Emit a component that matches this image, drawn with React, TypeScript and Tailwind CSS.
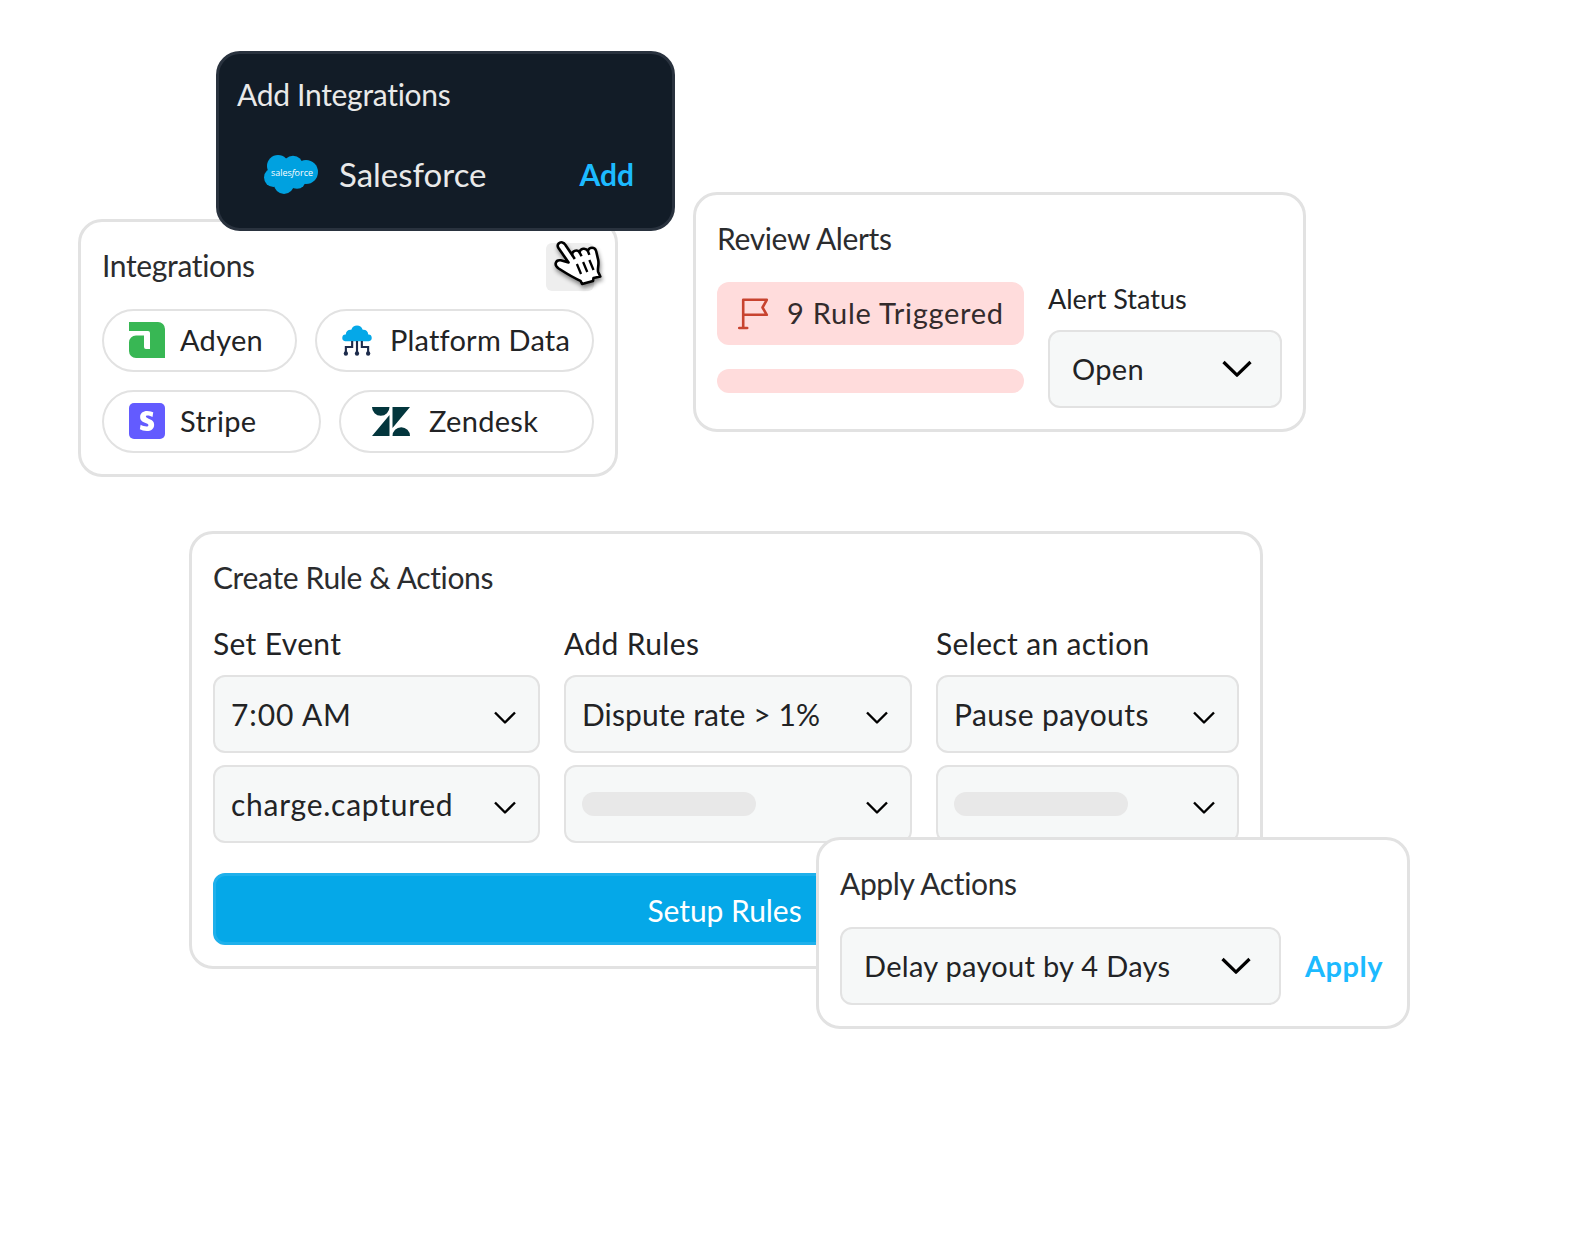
import { clsx } from 'clsx';
import { SiStripe } from 'react-icons/si';

function Chevron({ large = false }) {
  return large ? (
    <svg width="30" height="18" viewBox="0 0 30 18" fill="none" className="shrink-0">
      <path d="M1.5 2 15 15.2 28.5 2" stroke="#000" strokeWidth="3.2" strokeLinejoin="round" />
    </svg>
  ) : (
    <svg width="22" height="14" viewBox="0 0 22 14" fill="none" className="mt-[7px] shrink-0">
      <path d="M1 1.5 11 11.5 21 1.5" stroke="#000" strokeWidth="2.4" strokeLinejoin="round" />
    </svg>
  );
}

function SalesforceLogo() {
  return (
    <svg width="56" height="42" viewBox="0 0 56 42" className="mt-px shrink-0">
      <g fill="#00a1e0">
        <circle cx="15" cy="12" r="11" />
        <circle cx="30" cy="11.5" r="9.8" />
        <circle cx="43" cy="18" r="12" />
        <circle cx="10.5" cy="23.5" r="9.5" />
        <circle cx="21" cy="30" r="10" />
        <circle cx="34" cy="26" r="8.8" />
        <rect x="12" y="10" width="28" height="20" />
      </g>
      <text
        x="8"
        y="22"
        fill="#fff"
        textLength="42"
        lengthAdjust="spacingAndGlyphs"
        className="font-['Open_Sans',sans-serif] text-[9.5px] font-medium"
      >
        sales<tspan fontStyle="italic">f</tspan>orce
      </text>
    </svg>
  );
}

function AdyenLogo() {
  return (
    <svg width="36" height="36" viewBox="0 0 36 36" className="mb-px shrink-0">
      <path
        fill="#38b754"
        d="M0 0h29a7 7 0 0 1 7 7v29H7a7 7 0 0 1-7-7v-8.500a7 7 0 0 1 7-7h8V25a2 2 0 0 0 2 2h4V11a2 2 0 0 0-2-2H0z"
      />
    </svg>
  );
}

function PlatformLogo() {
  return (
    <svg width="30" height="31" viewBox="0 0 31 31" preserveAspectRatio="none" fill="none" className="shrink-0">
      <path
        fill="#05a8e8"
        d="M3.300 16.200a3.300 3.300 0 0 1 .6-6.600C4 6.500 6.300 4.500 9.600 4.800 10.700 2 12.700.6 15.500.6s4.800 1.400 5.900 4.200c3.300-.3 5.600 1.700 5.700 4.800a3.300 3.300 0 0 1 .6 6.600z"
      />
      <path stroke="#1d2b4b" strokeWidth="2.2" d="M10.500 16v6H4v7M15.500 16v12M20.500 16v6H27v7" />
      <g fill="#1d2b4b">
        <circle cx="4" cy="28.500" r="2.200" />
        <circle cx="15.500" cy="28.500" r="2.200" />
        <circle cx="27" cy="28.500" r="2.200" />
      </g>
    </svg>
  );
}

function StripeLogo() {
  return (
    <span className="mb-px flex size-9 shrink-0 items-center justify-center rounded-[5px] bg-[#635bff]">
      <SiStripe className="size-5 text-white" />
    </span>
  );
}

function ZendeskLogo() {
  return (
    <svg width="38" height="29" viewBox="0 0 38 29" fill="#03363d" className="shrink-0">
      <path d="M0 0h17.500a8.750 8.750 0 0 1-17.500 0zM20.500 0H38L20.500 21zM17.500 8v21H0zM20.500 29a8.750 8.750 0 0 1 17.500 0z" />
    </svg>
  );
}

function FlagIcon() {
  return (
    <svg width="31" height="32" viewBox="0 0 31 32" fill="none" className="shrink-0">
      <path
        d="M5.200 30V1.800h23.600l-4.300 7.700 4.300 7.300H5.200M1.200 30h8"
        stroke="#c8432f"
        strokeWidth="2.600"
        strokeLinecap="round"
        strokeLinejoin="round"
      />
    </svg>
  );
}

function HandCursor() {
  return (
    <svg
      width="52"
      height="50"
      viewBox="0 0 50 50"
      preserveAspectRatio="none"
      className="absolute top-[-3px] left-[8px] drop-shadow-[1px_3px_2px_rgba(0,0,0,0.45)]"
    >
      <path
        d="M4.500 3.500C6.500 1.500 9.500 2.200 11 5l6.500 10c-.5-4 4.500-6 7-2.800.8-4 6-4.700 8-1.400 1.500-4 6.700-4 8 .2l2 9c1 5-1 9 0 12l2 4.500-6.500 1.500-.5 3-10.500 3-1.500-3.200C18 37.500 12 33.500 4.500 28.500c-5-3.500-3-9 2-8.200l7.500 2.200L4.300 8c-.9-1.500-.8-3.500.2-4.500z"
        fill="#fff"
        stroke="#000"
        strokeWidth="2.5"
        strokeLinejoin="round"
      />
      <path d="m17.500 15 2.500 4M24.500 12.200l2 4M32.500 10.800l1.500 4" stroke="#000" strokeWidth="2.4" />
      <path d="m22 24 4 10M28 22l4 10M34 20l4 10" stroke="#000" strokeWidth="2.2" />
    </svg>
  );
}

function Card({ className, children }) {
  return (
    <section className={clsx('rounded-3xl border-[3px] border-[#e2e2e2] bg-white p-[21px]', className)}>
      {children}
    </section>
  );
}

function Title({ children }) {
  return <h2 className="text-[30px] leading-[44px] tracking-[-0.35px] text-[#2b2c2e]">{children}</h2>;
}

function Pill({ className, children }) {
  return (
    <div
      className={clsx(
        'flex h-[63px] items-center rounded-full border-2 border-[#e2e2e2] text-[29px] tracking-[0.3px] text-[#222325] [&>span:last-child]:mb-0.5',
        className
      )}
    >
      {children}
    </div>
  );
}

function Select({ value, large = false, className = '', tracking = '' }) {
  return (
    <div
      className={clsx(
        'flex h-[78px] items-center justify-between rounded-xl border-2 border-[#e2e2e2] bg-[#f6f8f8] whitespace-nowrap text-[#222325]',
        large ? 'pr-[28px] pl-[22px] text-[29px]' : 'pr-[22px] pl-4 text-[30px]',
        className
      )}
    >
      {value ? (
        <span className={clsx(tracking, !large && 'mt-px')}>{value}</span>
      ) : (
        <span className="h-6 w-[174px] rounded-full bg-[#e8e8e8]" />
      )}
      <Chevron large={large} />
    </div>
  );
}

const columns = [
  {
    label: 'Set Event',
    options: [
      { value: '7:00 AM', tracking: 'tracking-[0.9px]' },
      { value: 'charge.captured', tracking: 'tracking-[0.75px]' },
    ],
  },
  { label: 'Add Rules', options: [{ value: 'Dispute rate > 1%', tracking: 'tracking-[0.1px]' }, { value: '' }] },
  { label: 'Select an action', options: [{ value: 'Pause payouts', tracking: 'tracking-[0.4px]' }, { value: '' }] },
];

function AddIntegrations() {
  return (
    <section className="absolute top-[-168px] left-[138px] h-[180px] w-[459px] rounded-3xl border-[3px] border-[#29323e] bg-[#121c27] px-[18px] pt-[18px] text-[#e9e9e9]">
      <h2 className="text-[30px] leading-[44px] tracking-[-0.3px]">Add Integrations</h2>
      <div className="mt-[34px] flex items-center pr-[20px] pl-[26px]">
        <SalesforceLogo />
        <span className="ml-[20px] text-[33px] leading-[48px]">Salesforce</span>
        <span className="ml-auto text-[30px] font-bold text-[#1cbaff]">Add</span>
      </div>
    </section>
  );
}

function Integrations() {
  return (
    <div className="relative mt-[27px] w-[540px]">
      <Card className="h-[258px]">
        <div className="flex h-12 justify-between">
          <Title>Integrations</Title>
          <div className="relative size-12 rounded-md bg-[#eee]">
            <HandCursor />
          </div>
        </div>
        <div className="mt-[18px] flex gap-[18px]">
          <Pill className="w-[195px] gap-[15px] pl-[25px]">
            <AdyenLogo />
            <span>Adyen</span>
          </Pill>
          <Pill className="w-[279px] gap-[18px] pl-[25px]">
            <PlatformLogo />
            <span className="tracking-[0.2px]">Platform Data</span>
          </Pill>
        </div>
        <div className="mt-[18px] flex gap-[18px]">
          <Pill className="w-[219px] gap-[15px] pl-[25px]">
            <StripeLogo />
            <span>Stripe</span>
          </Pill>
          <Pill className="w-[255px] gap-[19px] pl-[31px]">
            <ZendeskLogo />
            <span>Zendesk</span>
          </Pill>
        </div>
      </Card>
      <AddIntegrations />
    </div>
  );
}

function ReviewAlerts() {
  return (
    <Card className="h-[240px] w-[613px]">
      <Title>Review Alerts</Title>
      <div className="flex gap-6">
        <div className="mt-[22px] w-[307px]">
          <div className="flex h-[63px] items-center gap-[18px] rounded-xl bg-[#ffdcdc] pl-[21px] text-[29px] tracking-[0.75px] whitespace-nowrap text-[#332b2c]">
            <FlagIcon />
            <span className="mb-px">9 Rule Triggered</span>
          </div>
          <div className="mt-6 h-6 rounded-full bg-[#ffdcdc]" />
        </div>
        <div className="mt-[20px] w-[234px]">
          <p className="mb-3 text-[27px] leading-[38px] text-[#222325]">Alert Status</p>
          <Select value="Open" large tracking="tracking-[0.3px]" />
        </div>
      </div>
    </Card>
  );
}

function ApplyActions() {
  return (
    <Card className="absolute top-[306px] left-[627px] h-[192px] w-[594px]">
      <Title>Apply Actions</Title>
      <div className="mt-[22px] flex items-center gap-6">
        <Select value="Delay payout by 4 Days" large tracking="tracking-[0.3px]" className="w-[441px]" />
        <span className="text-[29px] font-bold tracking-[0.5px] text-[#1cbaff]">Apply</span>
      </div>
    </Card>
  );
}

function CreateRule() {
  return (
    <div className="relative mt-[54px] ml-[111px] w-[1074px]">
      <Card className="h-[438px]">
        <Title>Create Rule &amp; Actions</Title>
        <div className="mt-[22px] grid grid-cols-[327px_348px_303px] gap-6">
          {columns.map((column) => (
            <div key={column.label}>
              <p className="mb-[10px] text-[30px] leading-[44px] tracking-[0.35px] text-[#222325]">{column.label}</p>
              <div className="grid gap-3">
                {column.options.map((option, i) => (
                  <Select key={i} value={option.value} tracking={option.tracking} />
                ))}
              </div>
            </div>
          ))}
        </div>
        <div className="mt-[30px] flex h-[72px] items-center justify-center rounded-xl border-[3px] border-[#1fb0eb] bg-[#05a8e8] pt-[3px] pr-[3px] text-[30px] tracking-[-0.05px] text-white">
          Setup Rules
        </div>
      </Card>
      <ApplyActions />
    </div>
  );
}

export default function App() {
  return (
    <main className="h-[1254px] w-[1569px] overflow-hidden bg-white pt-[192px] pl-[78px] font-['Lato','Liberation_Sans',sans-serif] [font-variant-ligatures:none]">
      <div className="flex items-start gap-[75px]">
        <Integrations />
        <ReviewAlerts />
      </div>
      <CreateRule />
    </main>
  );
}
